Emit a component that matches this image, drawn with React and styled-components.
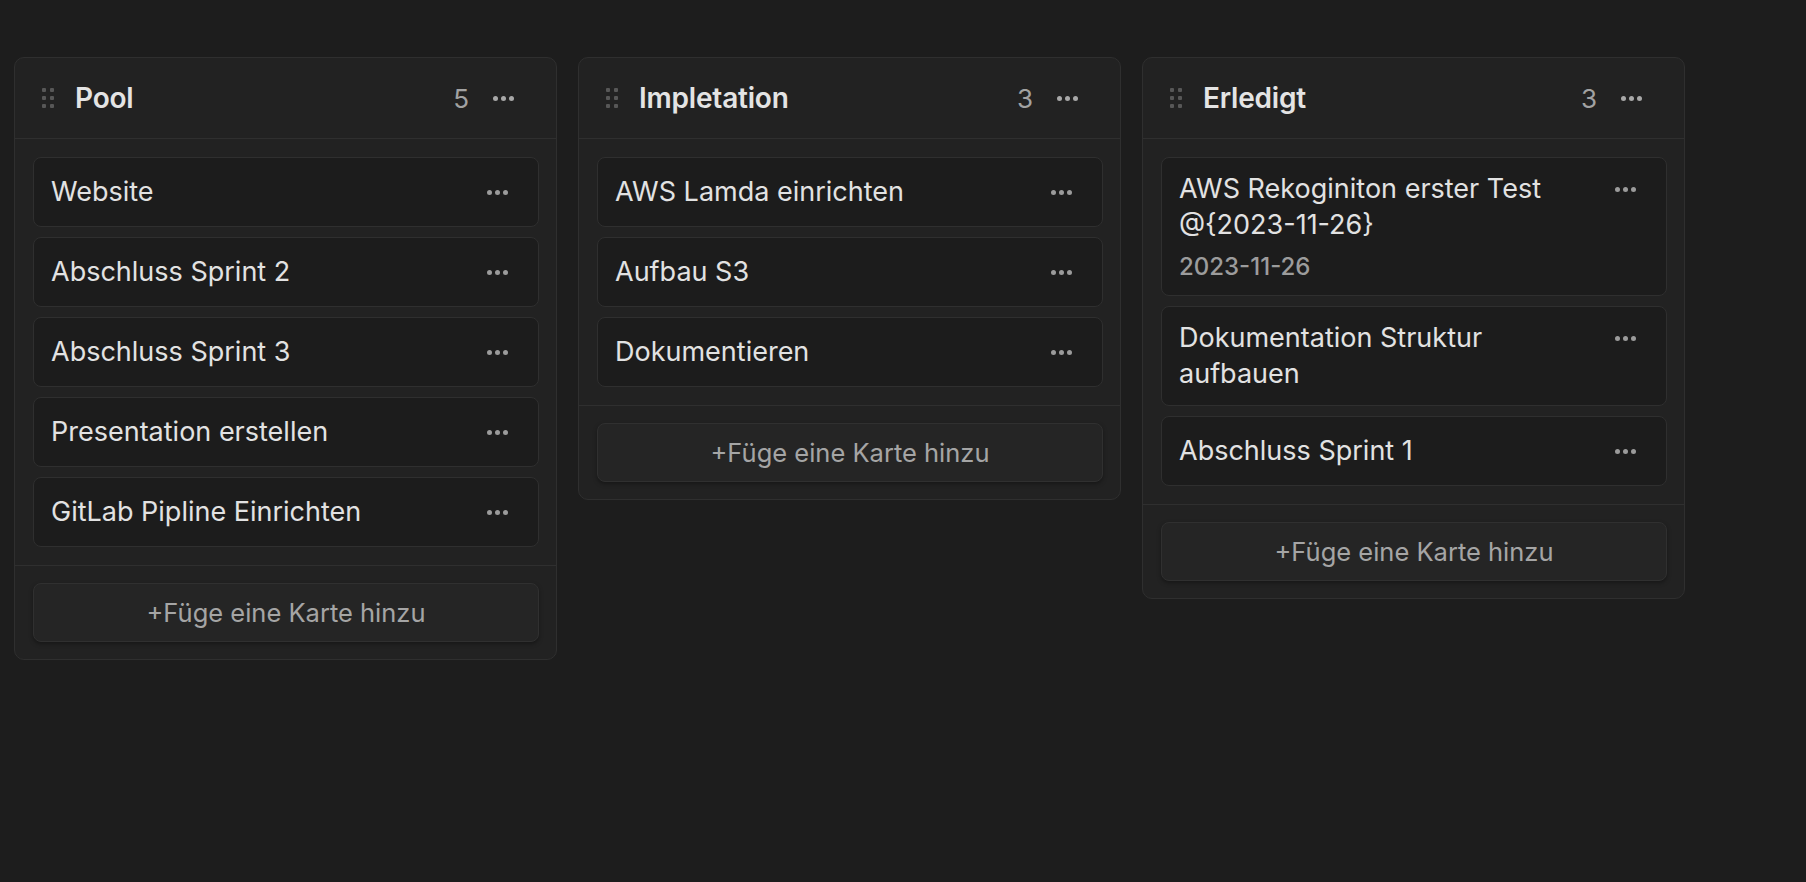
import styled, { createGlobalStyle } from "styled-components";

const GlobalStyle = createGlobalStyle`
    html, body {
        margin: 0;
        padding: 0;
        background-color: #1d1d1d;
        font-family: Inter, "Noto Sans", "Liberation Sans", sans-serif;
    }
`

const Board = styled.div`
    display: flex;
    align-items: flex-start;
    gap: 21px;
    padding: 57px 0 0 14px;
`

const Column = styled.section`
    display: flex;
    flex-direction: column;
    width: 543px;
    box-sizing: border-box;
    background-color: #222222;
    border: 1px solid #2f2f2f;
    border-radius: 10px;
`

const Header = styled.div`
    display: flex;
    align-items: center;
    height: 80px;
    padding: 0 33px 0 27px;
    border-bottom: 1px solid #2f2f2f;
`

const Handle = styled.div`
    display: grid;
    grid-template-columns: repeat(2, 4px);
    grid-auto-rows: 4px;
    gap: 4px;
    margin-right: 21px;

    span {
        background-color: #575757;
        border-radius: 1px;
    }
`

const Title = styled.h2`
    flex: 1;
    margin: 0;
    font-size: 28px;
    font-weight: 600;
    color: #e4e4e4;
    letter-spacing: -0.2px;
`

const Count = styled.span`
    font-size: 26px;
    color: #a2a2a2;
    margin-right: 14px;
`

const DotsButton = styled.button`
    display: flex;
    align-items: center;
    justify-content: center;
    gap: 3px;
    width: 40px;
    height: ${props => props.$tall ? "36px" : "42px"};
    padding: 0;
    border: none;
    background: transparent;
    flex-shrink: 0;

    span {
        width: 5px;
        height: 5px;
        border-radius: 50%;
        background-color: ${props => props.$light ? "#a8a8a8" : "#9b9b9b"};
    }
`

const CardList = styled.div`
    display: flex;
    flex-direction: column;
    gap: 10px;
    padding: 18px 17px 18px 18px;
    border-bottom: 1px solid #2f2f2f;
`

const Card = styled.div`
    display: flex;
    align-items: flex-start;
    gap: 36px;
    padding: 13px 21px 13px 17px;
    background-color: #1c1c1c;
    border: 1px solid #2f2f2f;
    border-radius: 8px;
`

const CardBody = styled.div`
    flex: 1;
    display: flex;
    flex-direction: column;
    justify-content: center;
    min-height: 42px;
`

const CardTitle = styled.div`
    font-size: 27px;
    line-height: 36px;
    color: #e2e2e2;
`

const CardDate = styled.div`
    margin-top: 9px;
    font-size: 24px;
    line-height: 30px;
    font-weight: 500;
    color: #9c9c9c;
`

const Footer = styled.div`
    padding: 17px 17px 17px 18px;
`

const AddButton = styled.button`
    width: 100%;
    height: 59px;
    background-color: #252525;
    border: 1px solid #303030;
    border-radius: 8px;
    box-shadow: 0 2px 4px rgba(0, 0, 0, 0.35);
    color: #a5a5a5;
    font-family: inherit;
    font-size: 25.5px;
`

const columns = [
    {
        title: "Pool",
        cards: [
            { title: "Website" },
            { title: "Abschluss Sprint 2" },
            { title: "Abschluss Sprint 3" },
            { title: "Presentation erstellen" },
            { title: "GitLab Pipline Einrichten" },
        ],
    },
    {
        title: "Impletation",
        cards: [
            { title: "AWS Lamda einrichten" },
            { title: "Aufbau S3" },
            { title: "Dokumentieren" },
        ],
    },
    {
        title: "Erledigt",
        cards: [
            { title: "AWS Rekoginiton erster Test @{2023-11-26}", date: "2023-11-26" },
            { title: "Dokumentation Struktur aufbauen", multi: true },
            { title: "Abschluss Sprint 1" },
        ],
    },
]

const Dots = ({ light, tall }) => (
    <DotsButton $light={light} $tall={tall}>
        <span /><span /><span />
    </DotsButton>
)

const App = () => {
    return (
        <>
            <GlobalStyle />
            <Board>
                {columns.map(column => (
                    <Column key={column.title}>
                        <Header>
                            <Handle>
                                {[0, 1, 2, 3, 4, 5].map(i => <span key={i} />)}
                            </Handle>
                            <Title>{column.title}</Title>
                            <Count>{column.cards.length}</Count>
                            <Dots light />
                        </Header>
                        <CardList>
                            {column.cards.map(card => (
                                <Card key={card.title}>
                                    <CardBody>
                                        <CardTitle>{card.title}</CardTitle>
                                        {card.date && <CardDate>{card.date}</CardDate>}
                                    </CardBody>
                                    <Dots tall={card.date || card.multi} />
                                </Card>
                            ))}
                        </CardList>
                        <Footer>
                            <AddButton>+Füge eine Karte hinzu</AddButton>
                        </Footer>
                    </Column>
                ))}
            </Board>
        </>
    )
}

export default App;
